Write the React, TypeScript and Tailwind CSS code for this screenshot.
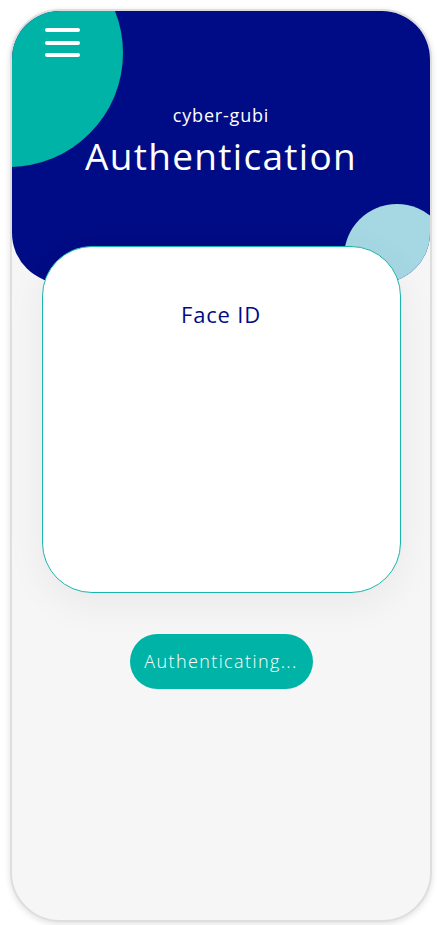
const font = { fontFamily: '"Open Sans", "DejaVu Sans", sans-serif' };

export default function App() {
  return (
    <div className="min-h-screen bg-white pt-[9px] pl-[10px]" style={font}>
      <div className="relative flex h-[913px] w-[422px] flex-col overflow-hidden rounded-[50px] border-2 border-[#dedede] bg-[#f6f6f6] shadow-[0_2px_6px_rgba(0,0,0,0.12)]">
        <header className="relative h-[272px] shrink-0 overflow-hidden rounded-b-[50px] bg-[#000c85]">
          <div className="absolute -left-[117px] -top-[72px] h-[228px] w-[228px] rounded-full bg-[#00b3a7]" />
          <div className="absolute left-[332px] top-[193px] h-[106px] w-[106px] rounded-full bg-[#a6d8e3]" />
          <div className="relative flex flex-col items-center">
            <button className="self-start pl-[33px] pt-[17px]" aria-label="menu">
              <span className="flex w-[35px] flex-col gap-[8.5px]">
                <span className="h-[4px] rounded-full bg-white" />
                <span className="h-[4px] rounded-full bg-white" />
                <span className="h-[4px] rounded-full bg-white" />
              </span>
            </button>
            <p className="mt-[47px] text-[18px] font-medium leading-[22px] tracking-[0.8px] text-white">cyber-gubi</p>
            <h1 className="mt-[7px] text-[37px] leading-[46px] tracking-[1.3px] text-white">Authentication</h1>
          </div>
        </header>

        <section className="relative z-10 mx-auto -mt-[37px] h-[347px] w-[359px] rounded-[50px] border border-[#1ab5ab] bg-white shadow-[0_10px_40px_rgba(0,0,0,0.06)]">
          <h2 className="pt-[53px] text-center text-[22px] font-medium leading-[28px] tracking-[0.8px] text-[#000c85]">Face ID</h2>
        </section>

        <div className="mt-[41px] flex justify-center">
          <button className="h-[55px] w-[183px] rounded-full bg-[#00b3a7] text-[18px] font-light tracking-[1.4px] text-white">
            Authenticating...
          </button>
        </div>
      </div>
    </div>
  );
}
